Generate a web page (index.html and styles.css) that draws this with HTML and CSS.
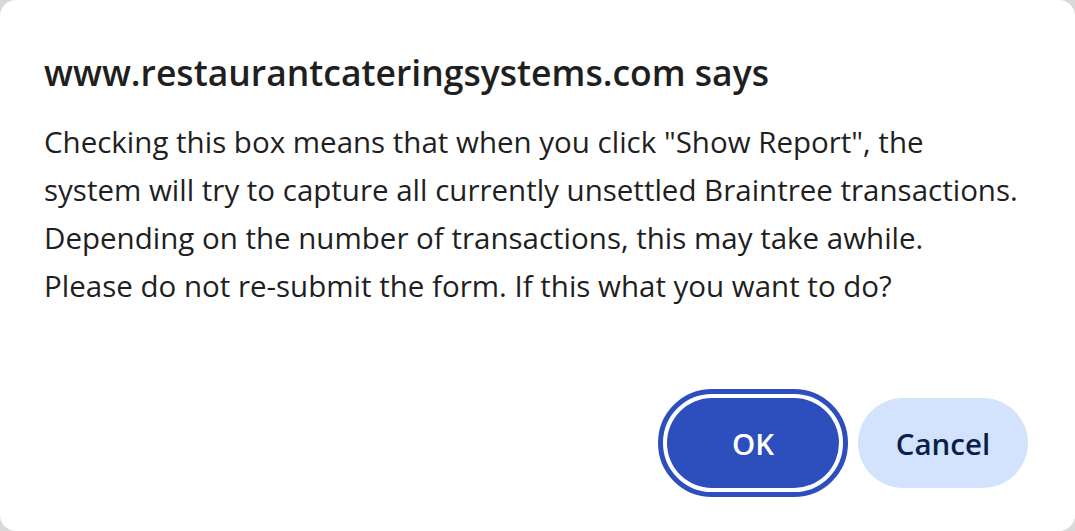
FILE: index.html
```html
<!DOCTYPE html>
<html>
<head>
<meta charset="utf-8">
<link rel="stylesheet" href="styles.css">
</head>
<body>
<div class="dialog">
  <h1 class="title">www.restaurantcateringsystems.com says</h1>
  <p class="message">Checking this box means that when you click "Show Report", the<br>system will try to capture all currently unsettled Braintree transactions.<br>Depending on the number of transactions, this may take awhile.<br>Please do not re-submit the form. If this what you want to do?</p>
  <div class="actions">
    <button class="btn btn-ok">OK</button>
    <button class="btn btn-cancel">Cancel</button>
  </div>
</div>
</body>
</html>
```

FILE: styles.css
```css
html, body {
  margin: 0;
  padding: 0;
  background: #d9d9d9;
  width: 1075px;
  height: 531px;
  overflow: hidden;
}
.dialog {
  box-sizing: border-box;
  width: 1075px;
  height: 531px;
  background: #ffffff;
  border-radius: 16px;
  padding: 50px 47px 0 44px;
  font-family: "Open Sans", "Noto Sans", sans-serif;
  color: #1f1f1f;
  display: flex;
  flex-direction: column;
}
.title {
  margin: 0;
  font-size: 35.5px;
  font-weight: 600;
  line-height: 44px;
  white-space: nowrap;
}
.message {
  margin: 24px 0 0 0;
  font-size: 29.5px;
  line-height: 48px;
  font-weight: 400;
  white-space: nowrap;
}
.actions {
  display: flex;
  justify-content: flex-end;
  gap: 19px;
  margin-top: 88px;
}
.btn {
  font-family: "Open Sans", "Noto Sans", sans-serif;
  font-size: 29.5px;
  font-weight: 600;
  height: 90px;
  border: none;
  border-radius: 45px;
  padding: 0;
}
.btn-ok {
  width: 172px;
  background: #2c4fbd;
  color: #ffffff;
  outline: 5px solid #2c4fbd;
  outline-offset: 4px;
}
.btn-cancel {
  width: 170px;
  background: #d3e3fd;
  color: #0a1f4a;
}
```
